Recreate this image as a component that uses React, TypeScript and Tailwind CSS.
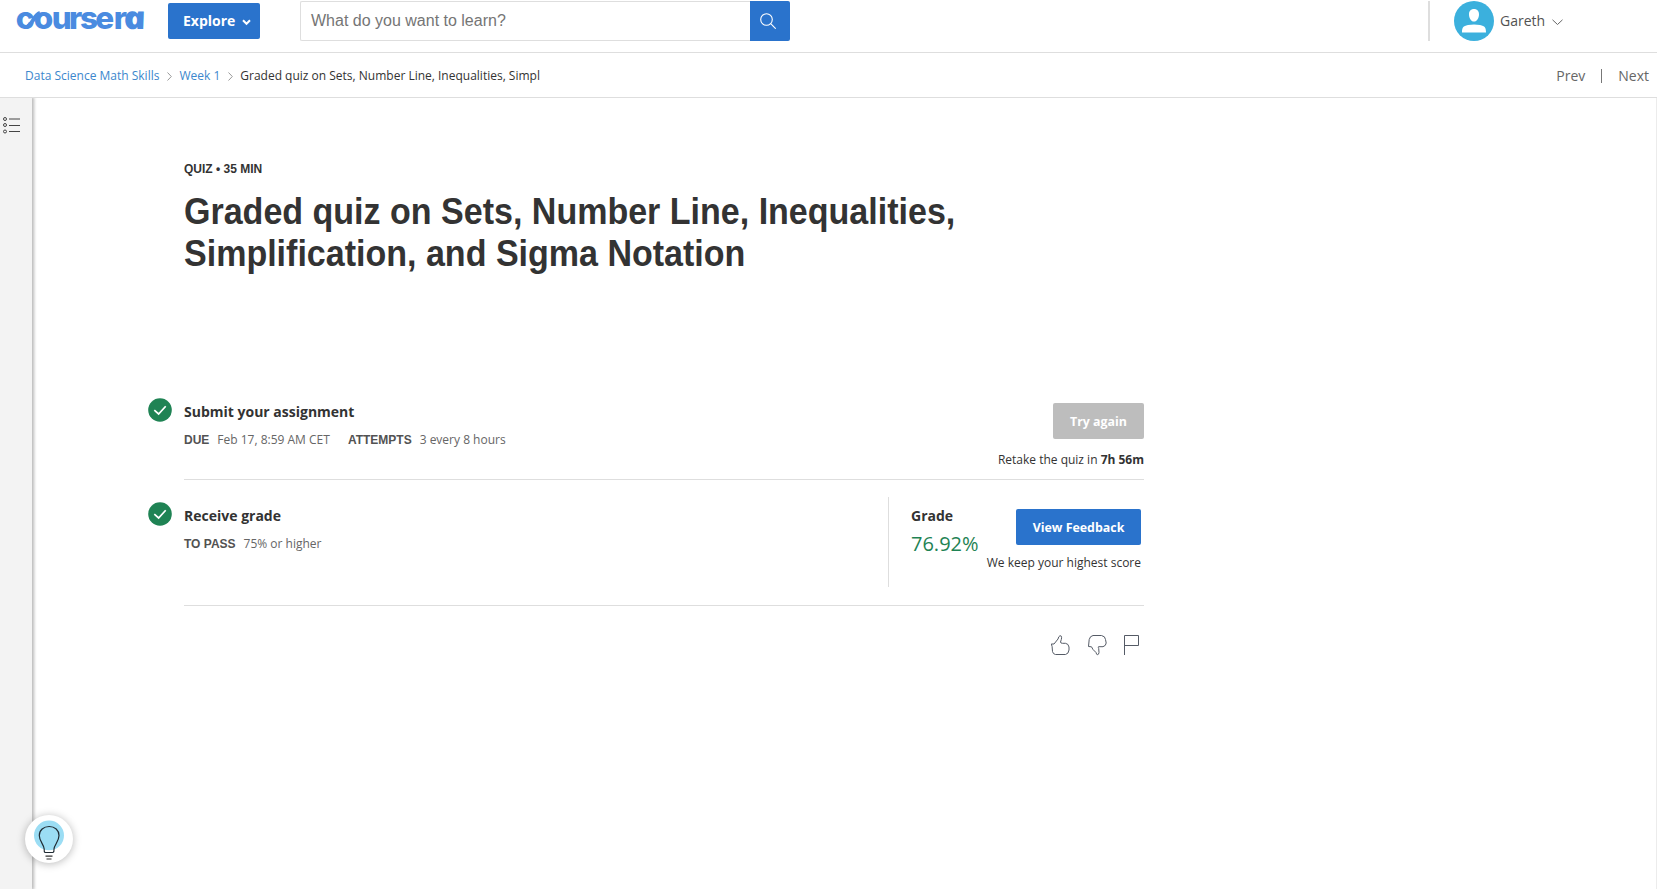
import React from "react";

function Logo() {
  return (
    <svg width="140" height="44" viewBox="0 0 140 44" aria-label="coursera" className="block overflow-visible text-[#4a8be0]" fill="currentColor">
      <text y="28.500" x="-.3 17.800 35.800 53 64 79.300 97.800" fontFamily="Inter, sans-serif" fontWeight="800" fontSize="31.500">courser</text>
      <text transform="translate(109.300 28.500) skewX(12) scale(1.180 1)" fontFamily="Open Sans, sans-serif" fontStyle="italic" fontWeight="800" fontSize="31.500">a</text>
      <path d="M12 26.500 C17 23 18 15 24 13" fill="none" stroke="currentColor" strokeWidth="4" />
    </svg>
  );
}

function Check() {
  return (
    <svg width="24" height="24" viewBox="0 0 24 24" className="block shrink-0">
      <circle cx="12" cy="12" r="11.8" fill="#1f8354" />
      <path d="M6.3 12.2 L10.6 16 L17.7 8.2" fill="none" stroke="#fff" strokeWidth="1.7" />
    </svg>
  );
}

function Crumb({ children }: { children: React.ReactNode }) {
  return <a className="whitespace-nowrap text-[#3c87cd]">{children}</a>;
}

function CrumbArrow() {
  return (
    <svg width="5" height="9" viewBox="0 0 5 9" className="mt-[2px] block shrink-0" fill="none" stroke="#999">
      <path d="M.5 .5 L4.3 4.5 L.5 8.5" />
    </svg>
  );
}

function Header() {
  return (
    <header className="flex h-[53px] items-start border-b border-[#dedede] pl-4">
      <div className="w-[152px]"><Logo /></div>
      <button className="mt-[3px] flex h-9 w-[92px] items-center rounded-[2px] bg-[#2a73cc] pl-[15px] text-sm font-bold text-white">
        Explore
        <svg width="9" height="7" viewBox="0 0 9 7" className="ml-[7px] mt-[2px]" fill="none" stroke="#fff" strokeWidth="2">
          <path d="M1 1.2 L4.5 4.8 L8 1.2" />
        </svg>
      </button>
      <div className="ml-10 mt-px flex h-10 w-[490px]">
        <div className="flex flex-1 items-center rounded-l-[2px] border border-r-0 border-[#dedede] pl-[10px] font-['Liberation_Sans',sans-serif] text-base text-[#757575]">
          What do you want to learn?
        </div>
        <button className="flex w-10 items-center justify-center rounded-r-[2px] bg-[#2a73cc]">
          <svg width="16" height="16" viewBox="0 0 16 16" className="-ml-1" fill="none" stroke="#fff" strokeWidth="1.1">
            <circle cx="6.5" cy="6.5" r="5.8" />
            <path d="M10.7 10.7 L15.7 15.7" />
          </svg>
        </button>
      </div>
      <div className="ml-auto mt-px flex h-10 w-[229px] items-center border-l-2 border-[#dedede] pl-6">
        <svg width="40" height="40" viewBox="0 0 40 40" className="block">
          <circle cx="20" cy="20" r="20" fill="#3bb0dd" />
          <path d="M20 8 c3.2 0 5 2.1 5 5.2 c0 3.8-2 7.3-5 7.3 s-5-3.5-5-7.3 C15 10.100 16.800 8 20 8Z M8 31.500 c0-4.800 1-6.500 6-7.500 c4-.7 8-.7 12 0 c5 1 6 2.700 6 7.500Z" fill="#fff" />
        </svg>
        <span className="ml-[6px] w-[45px] text-sm text-[#525252]">Gareth</span>
        <svg width="11" height="7" viewBox="0 0 11 7" className="ml-[7px] mt-[2px]" fill="none" stroke="#666">
          <path d="M.5 .8 L5.500 5.500 L10.500 .8" />
        </svg>
      </div>
    </header>
  );
}

function Breadcrumbs() {
  return (
    <nav className="flex h-[45px] items-center border-b border-[#dedede] pl-[25px] pr-2 text-xs">
      <div className="flex items-center gap-2 pt-px">
        <Crumb>Data Science Math Skills</Crumb>
        <CrumbArrow />
        <span className="-ml-px flex items-center gap-2">
          <Crumb>Week 1</Crumb>
          <CrumbArrow />
        </span>
        <span className="-ml-px whitespace-nowrap text-[#333]">Graded quiz on Sets, Number Line, Inequalities, Simpl</span>
      </div>
      <div className="ml-auto flex items-center pt-px text-sm text-[#666]">
        <span>Prev</span>
        <span className="mx-4 h-[14px] w-px bg-[#777]" />
        <span>Next</span>
      </div>
    </nav>
  );
}

function Sidebar() {
  return (
    <aside className="z-10 w-[32px] shrink-0 bg-[#f3f3f3] pl-[3px] pt-[18px] shadow-[1px_0_3px_1px_rgba(0,0,0,0.28)] [clip-path:inset(0_-8px_0_0)]">
      <svg width="18" height="18" viewBox="0 0 18 18" fill="none" stroke="#444" strokeWidth="1">
        <circle cx="2" cy="3" r="1.500" />
        <circle cx="2" cy="9" r="1.500" />
        <circle cx="2" cy="15.500" r="1.500" />
        <path d="M6 3 H17 M6 9.500 H17 M6 15.500 H17" />
      </svg>
    </aside>
  );
}

function Feedback() {
  return (
    <div className="flex h-[22px] justify-end text-[#555b66]">
      <svg width="20" height="22" viewBox="0 0 20 22" fill="none" stroke="currentColor">
        <path d="M.3 9 H3 L7 4 L7.800 1.800 Q9 -.2 10.300 1.200 Q10.900 2.600 10.300 4.500 L9.500 7 Q9.500 8.300 11.500 8.300 H14.500 Q17.500 8.700 18 12 V15 Q17.500 19 14.500 19.500 H4.500 Q2 19.200 1.500 16.500 L1.100 11.500 Z" />
      </svg>
      <svg width="20" height="22" viewBox="0 0 20 22" className="ml-[17px]" fill="none" stroke="currentColor">
        <path d="M.5 11.500 L1.200 4.500 Q2 1 5 .5 H13.500 Q17.300 1.200 17.500 4.500 L18.200 8 Q18 10.800 15 11.700 H10.500 Q10 12 10.700 13.500 L11 17.500 Q10.800 19.700 9.300 19.800 Q8.500 19.500 8 17.500 L5 14.500 L3.500 11.800 Z" />
      </svg>
      <svg width="17" height="22" viewBox="0 0 17 22" className="ml-[15px] mr-[4px]" fill="none" stroke="currentColor">
        <path d="M1.500 20 V.5 H15.500 V10.500 H1.500" />
      </svg>
    </div>
  );
}

function Meta({ label, value }: { label: string; value: string }) {
  return (
    <span className="flex gap-2 whitespace-nowrap">
      <span className="font-['Liberation_Sans',sans-serif] font-bold text-[#525252]">{label}</span>
      <span className="text-[#666]">{value}</span>
    </span>
  );
}

function Bulb() {
  return (
    <button className="absolute left-[25px] top-[815px] z-20 flex h-12 w-12 items-center justify-center rounded-full bg-white shadow-[0_1px_8px_rgba(0,0,0,0.28)]">
      <svg width="48" height="48" viewBox="0 0 48 48">
        <circle cx="24" cy="20.500" r="15" fill="#9bddf4" />
        <path d="M19 35.500 V38 H29 V35.500" fill="#fff" />
        <path d="M20 37.500 Q19 37 19.200 34 C19 29.500 14.300 26.500 14.300 20.500 C14.300 15.200 18.600 11.500 24.200 11.500 C29.800 11.500 34 15.200 34 20.500 C34 26.500 29.300 29.500 29 34 Q29.200 37 28 37.500 Z" fill="none" stroke="#202b33" strokeWidth="1.200" />
        <path d="M20.500 41.200 H27.500 M21.500 44 H26.500" stroke="#333" strokeWidth="1.200" />
      </svg>
    </button>
  );
}

export default function App() {
  return (
    <div className="relative flex h-[889px] w-[1657px] flex-col overflow-hidden bg-white font-['Open_Sans',sans-serif]">
      <Header />
      <Breadcrumbs />
      <div className="flex min-h-0 flex-1">
        <Sidebar />
        <main className="flex-1 border-r border-[#ececec] pl-[152px] pt-[63px] text-[#333]">
          <div className="w-[960px]">
            <p className="h-4 font-['Liberation_Sans',sans-serif] text-xs leading-4 font-bold">
              <span className="inline-block whitespace-nowrap">QUIZ • 35 MIN</span>
            </p>
            <h1 className="mt-[14px] h-[84px] origin-left scale-x-[0.945] whitespace-nowrap font-['Liberation_Sans',sans-serif] text-[36px] leading-[42px] font-bold">
              Graded quiz on Sets, Number Line, Inequalities,<br />Simplification, and Sigma Notation
            </h1>

            <section className="mt-[123px] -ml-9 flex h-[82px]">
              <Check />
              <div className="ml-3 flex flex-1 justify-between border-b border-[#dedede]">
                <div className="pt-1">
                  <h2 className="text-sm leading-5 font-bold">Submit your assignment</h2>
                  <div className="mt-2 flex gap-[18px] text-xs leading-5">
                    <Meta label="DUE" value="Feb 17, 8:59 AM CET" />
                    <Meta label="ATTEMPTS" value="3 every 8 hours" />
                  </div>
                </div>
                <div className="flex flex-col items-end pt-[5px]">
                  <button className="h-9 w-[91px] rounded-[2px] bg-[#bdbdbd] pt-[2px] text-[12.4px] font-bold text-white">Try again</button>
                  <p className="mt-[11px] text-xs leading-5">Retake the quiz in <b>7h 56m</b></p>
                </div>
              </div>
            </section>

            <section className="-ml-9 flex h-[126px]">
              <div className="pt-[22px]"><Check /></div>
              <div className="ml-3 flex flex-1 border-b border-[#dedede]">
                <div className="w-[704px] pt-[26px]">
                  <h2 className="text-sm leading-5 font-bold">Receive grade</h2>
                  <div className="mt-2 flex text-xs leading-5">
                    <Meta label="TO PASS" value="75% or higher" />
                  </div>
                </div>
                <div className="mt-[17px] flex h-[90px] flex-1 border-l border-[#dedede] pl-[22px] pr-[3px]">
                  <div className="w-[68px] pt-[9px]">
                    <h2 className="text-sm leading-5 font-bold">Grade</h2>
                    <p className="mt-1 text-xl leading-7 text-[#1f8354]">76.92%</p>
                  </div>
                  <div className="ml-auto flex flex-col items-end pt-3">
                    <button className="h-9 w-[125px] rounded-[2px] bg-[#2a73cc] pt-[2px] text-[12.4px] font-bold text-white">View Feedback</button>
                    <p className="mt-[8px] whitespace-nowrap text-xs leading-5">We keep your highest score</p>
                  </div>
                </div>
              </div>
            </section>

            <div className="pt-[29px]"><Feedback /></div>
          </div>
        </main>
      </div>
      <Bulb />
    </div>
  );
}
